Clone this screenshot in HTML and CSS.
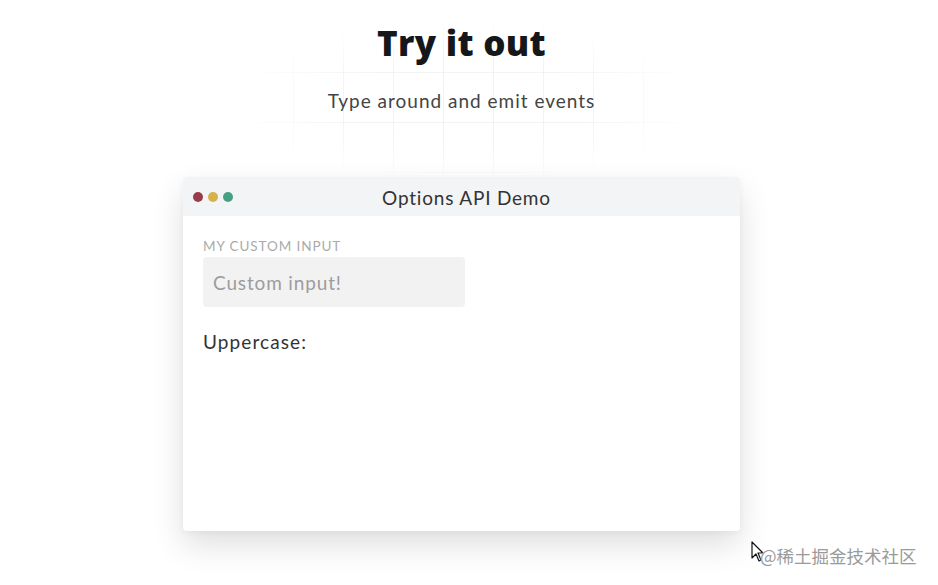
FILE: index.html
```html
<!DOCTYPE html>
<html lang="en">
<head>
<meta charset="utf-8">
<title>Try it out</title>
<link rel="stylesheet" href="styles.css">
</head>
<body>
<main class="page">
  <div class="grid-bg"></div>
  <h1 class="title">Try it out</h1>
  <p class="subtitle">Type around and emit events</p>
  <section class="window">
    <header class="window-bar">
      <div class="dots">
        <span class="dot dot-red"></span>
        <span class="dot dot-yellow"></span>
        <span class="dot dot-green"></span>
      </div>
      <div class="window-title">Options API Demo</div>
    </header>
    <div class="window-body">
      <label class="field-label" for="ci">MY CUSTOM INPUT</label>
      <input id="ci" class="field-input" type="text" placeholder="Custom input!">
      <p class="uppercase">Uppercase:</p>
    </div>
  </section>
  <div class="watermark">
    <svg class="cursor" width="14" height="22" viewBox="0 0 14 22"><path d="M1 1 L1 17 L5 13 L8 20 L10 19 L7 12 L12 12 Z" fill="#fff" stroke="#111" stroke-width="1.2" stroke-linejoin="round"/></svg>
    <span class="wm-text">@稀土掘金技术社区</span>
  </div>
</main>
</body>
</html>
```
FILE: styles.css
```css
* { box-sizing: border-box; }
html, body { margin: 0; padding: 0; background: #ffffff; }
body {
  font-family: Lato, "Open Sans", sans-serif;
  color: #333;
  width: 938px;
  height: 585px;
  overflow: hidden;
}
.page {
  position: relative;
  display: flex;
  flex-direction: column;
  align-items: center;
  padding-top: 22px;
  padding-right: 15px;
  height: 585px;
}
.grid-bg {
  position: absolute;
  left: 243px;
  top: 22px;
  width: 450px;
  height: 160px;
  background-image:
    linear-gradient(to right, rgba(200,225,215,0.3) 1px, transparent 1px),
    linear-gradient(to bottom, rgba(200,225,215,0.3) 1px, transparent 1px);
  background-size: 50px 50px;
  background-position: 0 0;
  -webkit-mask-image: radial-gradient(ellipse at center, #000 40%, transparent 75%);
  mask-image: radial-gradient(ellipse at center, #000 40%, transparent 75%);
  z-index: 0;
}
.title {
  position: relative;
  margin: 0;
  font-family: "Open Sans", Inter, sans-serif;
  font-weight: 800;
  font-size: 35px;
  line-height: 42px;
  letter-spacing: 0.3px;
  color: #15171a;
}
.subtitle {
  position: relative;
  margin: 24px 0 0;
  font-size: 19px;
  line-height: 26px;
  letter-spacing: 1px;
  color: #444;
}
.window {
  position: relative;
  margin-top: 63px;
  width: 557px;
  height: 354px;
  background: #fff;
  border-radius: 4px;
  box-shadow: 0 14px 32px rgba(0,0,0,0.13), 0 2px 6px rgba(0,0,0,0.04);
  display: flex;
  flex-direction: column;
}
.window-bar {
  height: 39px;
  background: #f3f4f5;
  border-radius: 4px 4px 0 0;
  display: flex;
  align-items: center;
  position: relative;
}
.dots {
  display: flex;
  gap: 5px;
  padding-left: 10px;
  position: absolute;
  left: 0;
  top: 15px;
}
.dot {
  width: 10px;
  height: 10px;
  border-radius: 50%;
  display: block;
}
.dot-red { background: #973c4b; }
.dot-yellow { background: #d6b24b; }
.dot-green { background: #45a181; }
.window-title {
  flex: 1;
  text-align: center;
  font-size: 19px;
  letter-spacing: 0.8px;
  color: #333;
  padding-top: 1px;
  padding-left: 10px;
}
.window-body {
  padding: 22px 20px 20px;
  display: flex;
  flex-direction: column;
  align-items: flex-start;
}
.field-label {
  font-size: 13.5px;
  line-height: 16px;
  color: #aaa;
  letter-spacing: 0.9px;
}
.field-input {
  margin-top: 3px;
  width: 262px;
  height: 50px;
  border: none;
  border-radius: 4px;
  background: #f2f2f2;
  padding: 0 10px;
  font-family: Lato, sans-serif;
  font-size: 19px;
  letter-spacing: 0.85px;
  color: #333;
  outline: none;
}
.field-input::placeholder { color: #9c9c9c; }
.uppercase {
  margin: 22px 0 0;
  font-size: 19px;
  line-height: 26px;
  letter-spacing: 1.1px;
  color: #333;
}
.watermark {
  position: absolute;
  left: 751px;
  top: 541px;
  display: flex;
  align-items: flex-start;
}
.cursor { display: block; }
.wm-text {
  margin-left: -5px;
  margin-top: 5px;
  font-family: "Noto Sans CJK SC", sans-serif;
  font-size: 17.5px;
  line-height: 20px;
  color: #9a9a9a;
  text-shadow: 0 0 1px #fff;
}
```
